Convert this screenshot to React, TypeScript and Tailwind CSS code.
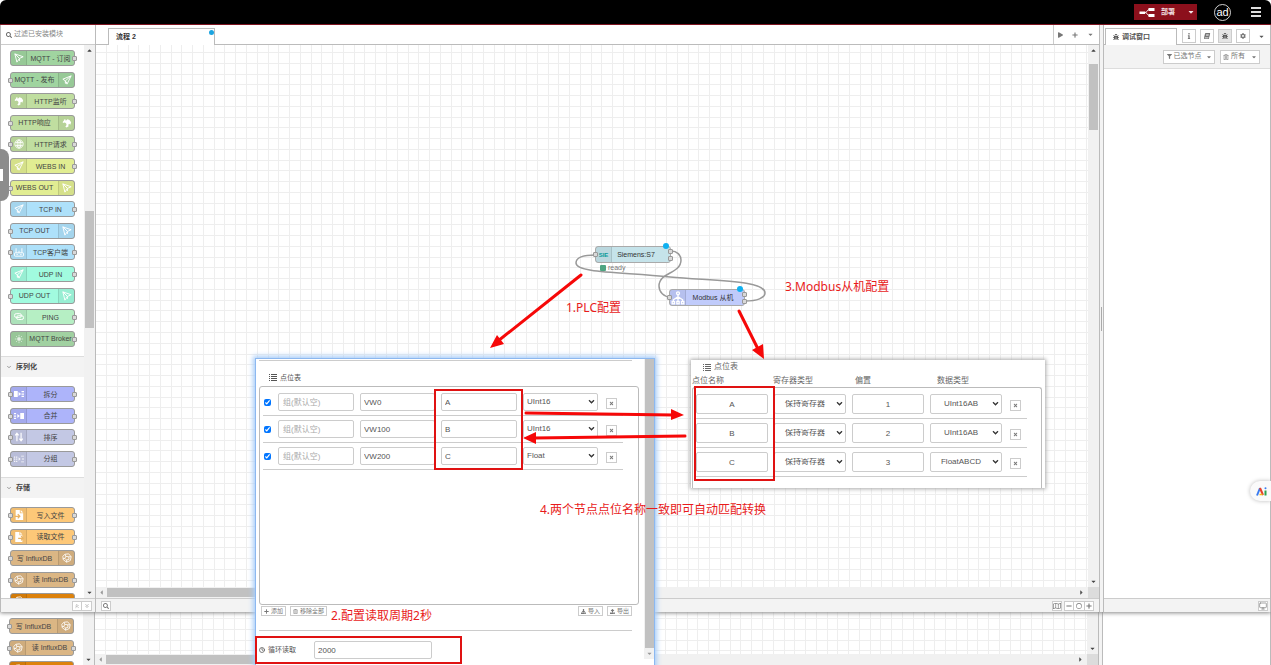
import React from "react";
import clsx from "clsx";
import {
  FaBook,
  FaBug,
  FaCaretDown,
  FaCaretLeft,
  FaCaretRight,
  FaCaretUp,
  FaCog,
  FaDownload,
  FaFilter,
  FaInfo,
  FaPlay,
  FaPlus,
  FaMinus,
  FaRegCircle,
  FaRegMap,
  FaRegTrashAlt,
  FaSearch,
  FaTimes,
  FaUpload,
} from "react-icons/fa";
import { FiChevronDown, FiChevronsDown, FiChevronsUp, FiClock, FiMonitor } from "react-icons/fi";

type IconName =
  | "send"
  | "receive"
  | "world"
  | "globe"
  | "router"
  | "link"
  | "sun"
  | "split"
  | "join"
  | "sort"
  | "batch"
  | "fileIn"
  | "fileOut"
  | "influx";

const icons: Record<IconName, React.ReactNode> = {
  send: (
    <g fill="none" stroke="#fff" strokeWidth="2.2" strokeLinejoin="round">
      <path d="M22 2 2 10l6 4 4 8Z" />
      <path d="M22 2 8 14v6l4-3" />
    </g>
  ),
  receive: (
    <g fill="none" stroke="#fff" strokeWidth="2.2" strokeLinejoin="round">
      <path d="m2 2 20 7-9 4-6 9Z" />
      <path d="m2 2 11 11v6" />
    </g>
  ),
  world: (
    <g fill="#fff">
      <path d="M2 9 6 5l4 1 3-3 5 2 4 5-2 6-3-2-2 3 1 3-5 3-3-2 3-4-1-4-3-2-5 1Z" />
      <path d="m4 5 3-2 2 1-3 3Z" />
    </g>
  ),
  globe: (
    <g fill="none" stroke="#fff" strokeWidth="2">
      <circle cx="12" cy="12" r="10" />
      <ellipse cx="12" cy="12" rx="4.500" ry="10" />
      <path d="M12 2v20M3 8.500h18M3 15.500h18" />
    </g>
  ),
  router: (
    <g fill="none" stroke="#fff" strokeWidth="2.2">
      <rect x="1" y="14" width="22" height="8" rx="2" />
      <path d="M5 14V3M19 14V3M12 14V9M6 18h3M15 18h3" />
    </g>
  ),
  link: (
    <g fill="none" stroke="#fff" strokeWidth="2.4">
      <rect x="1" y="4" width="17" height="9" rx="4.500" />
      <rect x="6" y="9" width="17" height="9" rx="4.500" />
    </g>
  ),
  sun: (
    <g fill="#fff" stroke="#fff" strokeWidth="1.8" opacity=".75">
      <circle cx="12" cy="12" r="3.500" />
      <path d="M12 2v4M12 18v4M2 12h4M18 12h4M5 5l3 3M16 16l3 3M5 19l3-3M16 8l3-3" />
    </g>
  ),
  split: (
    <g fill="#fff">
      <path d="M0 5h9v14H0zM11 7l6 5-6 5zM18 5h6v3h-6zM18 11h6v3h-6zM18 16h6v3h-6z" />
    </g>
  ),
  join: (
    <g fill="#fff">
      <path d="M15 5h9v14h-9zM8 7l6 5-6 5zM0 5h5v3H0zM0 11h5v3H0zM0 16h5v3H0z" />
    </g>
  ),
  sort: (
    <g fill="none" stroke="#fff" strokeWidth="2.8">
      <path d="M7 22V4M3 8l4-5 4 5M17 2v18M13 16l4 5 4-5" />
    </g>
  ),
  batch: (
    <g fill="#fff" opacity=".85">
      <path d="M0 6h3v3H0zM0 11h3v3H0zM0 16h3v3H0zM5 6h3v3H5zM5 11h3v3H5zM5 16h3v3H5zM11 8l5 4-5 4zM17 4h7v2h-7zM19 11h5v2h-5zM17 18h7v2h-7z" />
    </g>
  ),
  fileIn: (
    <g>
      <path fill="#fff" d="M4 0h10v8h8v16H4z" />
      <path fill="#fff" d="m16 0 6 6h-6z" />
      <path fill="none" stroke="#e9b264" strokeWidth="3" d="M2 15h10M9 10l5 5-5 5" />
    </g>
  ),
  fileOut: (
    <g>
      <path fill="#fff" d="M3 0h10v8h7v16H3z" />
      <path fill="#fff" d="m15 0 5 6h-5z" />
      <path fill="none" stroke="#e9b264" strokeWidth="3" d="M10 15h11M17 10l5 5-5 5" />
    </g>
  ),
  influx: (
    <g fill="none" stroke="#fff" strokeWidth="2">
      <path d="m7 3 9-1 6 7-2 9-9 4-8-6-1-8Z" />
      <path d="m9 8 7 1 1 6-6 2-4-4ZM9 8 7 3M16 9l6 0M11 17v5M7 13l-5 1" />
    </g>
  ),
};

type PaletteItem = {
  label: string;
  color: string;
  icon: IconName;
  side?: "left" | "right";
  ports: "in" | "out" | "both";
};

const network: PaletteItem[] = [
  { label: "MQTT - 订阅", color: "bg-[#a0d4a0]", icon: "receive", ports: "out" },
  { label: "MQTT - 发布", color: "bg-[#a0d4a0]", icon: "send", side: "right", ports: "in" },
  { label: "HTTP监听", color: "bg-[#c0dea0]", icon: "world", ports: "out" },
  { label: "HTTP响应", color: "bg-[#c0dea0]", icon: "world", side: "right", ports: "in" },
  { label: "HTTP请求", color: "bg-[#c0dea0]", icon: "globe", ports: "both" },
  { label: "WEBS IN", color: "bg-[#e1ed92]", icon: "send", ports: "out" },
  { label: "WEBS OUT", color: "bg-[#e1ed92]", icon: "receive", side: "right", ports: "in" },
  { label: "TCP IN", color: "bg-[#aee1fa]", icon: "send", ports: "out" },
  { label: "TCP OUT", color: "bg-[#aee1fa]", icon: "receive", side: "right", ports: "in" },
  { label: "TCP客户端", color: "bg-[#aee1fa]", icon: "router", ports: "both" },
  { label: "UDP IN", color: "bg-[#a1fbdf]", icon: "send", ports: "out" },
  { label: "UDP OUT", color: "bg-[#a1fbdf]", icon: "receive", side: "right", ports: "in" },
  { label: "PING", color: "bg-[#b6efc4]", icon: "link", ports: "out" },
  { label: "MQTT Broker", color: "bg-[#a1d1a1]", icon: "sun", ports: "out" },
];

const sequence: PaletteItem[] = [
  { label: "拆分", color: "bg-[#adb4fa]", icon: "split", ports: "both" },
  { label: "合并", color: "bg-[#adb4fa]", icon: "join", ports: "both" },
  { label: "排序", color: "bg-[#c3c8e4]", icon: "sort", ports: "both" },
  { label: "分组", color: "bg-[#c3c8e4]", icon: "batch", ports: "both" },
];

const influx: PaletteItem[] = [
  { label: "写 InfluxDB", color: "bg-[#dbb684]", icon: "influx", side: "right", ports: "in" },
  { label: "读 InfluxDB", color: "bg-[#dbb684]", icon: "influx", ports: "both" },
  { label: "", color: "bg-[#dd820c]", icon: "influx", ports: "in" },
];

const storage: PaletteItem[] = [
  { label: "写入文件", color: "bg-[#fdc878]", icon: "fileIn", ports: "both" },
  { label: "读取文件", color: "bg-[#fdc878]", icon: "fileOut", ports: "both" },
  ...influx,
];

const Port = ({ className }: { className: string }) => (
  <span className={clsx("absolute size-[5px] rounded-[1px] border border-[#999] bg-[#d9d9d9]", className)} />
);

const ListIcon = ({ className }: { className: string }) => (
  <svg viewBox="0 0 8 7" className={className} stroke="currentColor" shapeRendering="crispEdges">
    <path d="M0 .5h1M2 .5h6M0 2.500h1M2 2.500h6M0 4.500h1M2 4.500h6M0 6.500h1M2 6.500h6" />
  </svg>
);

const PaletteNode = ({ label, color, icon, side = "left", ports }: PaletteItem) => (
  <div
    className={clsx(
      "relative flex h-4 w-full shrink-0 rounded-[3px] border border-[#9a9a9a]",
      side === "right" && "flex-row-reverse",
      color,
    )}
  >
    <span
      className={clsx(
        "flex w-4 shrink-0 items-center justify-center border-black/10 bg-black/5",
        side === "right" ? "border-l" : "border-r",
      )}
    >
      <svg viewBox="0 0 24 24" className="size-[10px]">{icons[icon]}</svg>
    </span>
    <span className="flex min-w-0 flex-1 items-center justify-center whitespace-nowrap text-[7px] leading-none text-[#444]">
      {label}
    </span>
    {ports !== "out" && <Port className="-left-[3px] top-[5px]" />}
    {ports !== "in" && <Port className="-right-[3px] top-[5px]" />}
  </div>
);

const NodeList = ({ items, className }: { items: PaletteItem[]; className: string }) => (
  <div className={clsx("ml-[9px] flex w-[65px] flex-col justify-between", className)}>
    {items.map((item, i) => (
      <PaletteNode key={i} {...item} />
    ))}
  </div>
);

const CategoryTitle = ({ children }: { children: React.ReactNode }) => (
  <h3 className="flex h-[21px] items-center gap-1 border-t border-[#ddd] bg-[#f3f3f3] pl-[5px] text-[7px] font-bold text-[#444]">
    <FiChevronDown className="size-[6px]" />
    {children}
  </h3>
);

const Grid = ({ x, y }: { x: number; y: number }) => (
  <svg className="h-full w-full" stroke="#eeeeee" strokeWidth="1" shapeRendering="crispEdges">
    {Array.from({ length: 180 }, (_, i) => {
      const step = i * 10.77;
      return (
        <React.Fragment key={i}>
          <line x1={Math.round(x + step)} x2={Math.round(x + step)} y1="0" y2="100%" />
          <line y1={Math.round(y + step)} y2={Math.round(y + step)} x1="0" x2="100%" />
        </React.Fragment>
      );
    })}
  </svg>
);

const HScroll = () => (
  <div className="flex h-[11px] shrink-0 items-center bg-[#f1f1f1] text-[#555]">
    <div className="flex flex-1 items-center">
      <FaCaretLeft className="mx-[2px] size-[7px] text-[#999]" />
      <div className="h-[9px] w-2/5 bg-[#c1c1c1]" />
    </div>
    <FaCaretRight className="mr-[3px] size-[7px]" />
    <div className="h-full w-[11px] bg-[#dcdcdc]" />
  </div>
);

const iconButton = "flex items-center justify-center border border-[#ccc] bg-white text-[#777]";

const Header = () => (
  <header className="flex h-[25px] shrink-0 items-center justify-end rounded-t-[6px] border-b border-[#7c1420] bg-black pr-[10px]">
    <div className="mr-[17px] flex h-4 items-center bg-[#8c101c] text-[#f3e4e6]">
      <button className="flex h-full items-center gap-[6px] pl-[5px] pr-[9px] text-[7px] font-bold">
        <svg viewBox="0 0 32 22" className="h-[11px] w-4">
          <path d="M10 11C19 11 14 5 22 5M10 11c9 0 4 6 12 6" fill="none" stroke="#fff" strokeWidth="2" />
          <path d="M1 9h11v5H1zM19 2h12v6H19zM19 14h12v6H19z" fill="#fff" />
        </svg>
        部署
      </button>
      <button aria-label="部署选项" className="flex h-full w-[13px] items-center justify-center">
        <FaCaretDown className="size-2" />
      </button>
    </div>
    <button className="mr-5 flex size-[17px] items-center justify-center rounded-full border border-white/80 text-[11px] leading-none text-white">
      ad
    </button>
    <button aria-label="菜单" className="flex w-[10px] flex-col gap-[2px]">
      <span className="h-[2px] bg-[#ddd]" />
      <span className="h-[2px] bg-[#ddd]" />
      <span className="h-[2px] bg-[#ddd]" />
    </button>
  </header>
);

const Palette = () => (
  <aside className="flex w-24 shrink-0 flex-col border-x border-[#bbb] bg-white">
    <label className="flex h-5 shrink-0 items-center gap-[2px] border-b border-[#ccc] pl-[5px] text-[#666]">
      <FaSearch className="size-[6px]" />
      <input
        aria-label="过滤已安装模块"
        placeholder="过滤已安装模块"
        className="w-20 text-[7px] outline-none placeholder:text-[#888]"
      />
    </label>
    <div className="flex min-h-0 flex-1">
      <div className="w-[83px] overflow-hidden pt-[5px]">
        <NodeList items={network} className="mb-[9px] h-[297px]" />
        <CategoryTitle>序列化</CategoryTitle>
        <NodeList items={sequence} className="mb-[10px] mt-[9px] h-[81px]" />
        <CategoryTitle>存储</CategoryTitle>
        <NodeList items={storage} className="mt-[9px] h-[102px]" />
      </div>
      <div className="flex w-[11px] flex-col items-center bg-[#f1f1f1] pb-[2px] pt-[2px] text-[#444]">
        <FaCaretUp className="size-[7px]" />
        <div className="mt-[157px] h-[117px] w-[9px] bg-[#c1c1c1]" />
        <FaCaretDown className="mt-auto size-[7px]" />
      </div>
    </div>
    <div className="flex h-[14px] shrink-0 items-center justify-end border-t border-[#ccc] bg-[#f3f3f3] pr-[3px]">
      <button aria-label="全部折叠" className={clsx(iconButton, "size-[10px]")}>
        <FiChevronsUp className="size-[6px]" />
      </button>
      <button aria-label="全部展开" className={clsx(iconButton, "size-[10px] border-l-0")}>
        <FiChevronsDown className="size-[6px]" />
      </button>
    </div>
  </aside>
);

const Workspace = () => (
  <main className="flex min-w-0 flex-1 flex-col border-r border-[#bbb]">
    <div className="flex h-5 shrink-0 items-end border-b border-[#bbb] bg-white pl-3">
      <button className="relative -mb-px flex h-[17px] w-[107px] items-center border border-b-0 border-[#bbb] bg-white pl-[7px] text-[7px] font-bold text-[#333]">
        流程 2
        <span className="absolute right-0 top-[1px] size-[5px] rounded-full bg-[#1ba4e0]" />
      </button>
      <div className="ml-auto flex h-full w-[46px] items-center justify-between border-l border-[#ccc] pl-1 pr-[5px] text-[#777]">
        <button aria-label="下一个流程"><FaPlay className="h-[8px] w-[5px]" /></button>
        <button aria-label="添加流程"><FaPlus className="size-[6px]" /></button>
        <button aria-label="流程列表"><FaCaretDown className="size-[7px]" /></button>
      </div>
    </div>
    <div className="flex min-h-0 flex-1">
      <div className="min-w-0 flex-1 overflow-hidden">
        <Grid x={10} y={7} />
      </div>
      <div className="flex w-[11px] flex-col items-center bg-[#f1f1f1] py-[2px] text-[#444]">
        <FaCaretUp className="size-[7px]" />
        <div className="mt-[10px] h-[66px] w-[9px] bg-[#c1c1c1]" />
        <FaCaretDown className="mt-auto size-[7px]" />
      </div>
    </div>
    <HScroll />
    <div className="flex h-[14px] shrink-0 items-center border-t border-[#ccc] bg-[#f3f3f3] pl-[5px] pr-[5px]">
      <button aria-label="搜索" className={clsx(iconButton, "size-[10px]")}>
        <FaSearch className="size-[6px]" />
      </button>
      <button aria-label="地图" className={clsx(iconButton, "ml-auto mr-[2px] size-[10px]")}>
        <FaRegMap className="size-2" />
      </button>
      <button aria-label="缩小" className={clsx(iconButton, "size-[10px]")}>
        <FaMinus className="size-[6px]" />
      </button>
      <button aria-label="重置缩放" className={clsx(iconButton, "size-[10px] border-x-0")}>
        <FaRegCircle className="size-[6px]" />
      </button>
      <button aria-label="放大" className={clsx(iconButton, "size-[10px]")}>
        <FaPlus className="size-[6px]" />
      </button>
    </div>
  </main>
);

const Sidebar = () => (
  <aside className="flex w-[168px] shrink-0 flex-col border-x border-[#bbb] bg-white text-[7px] text-[#555]">
    <div className="flex h-5 shrink-0 items-end border-b border-[#bbb] pl-px">
      <button className="-mb-px flex h-[17px] w-[72px] items-center gap-[3px] border border-b-0 border-[#bbb] bg-white pl-[7px] font-bold">
        <FaBug className="size-[6px]" />
        调试窗口
      </button>
      <div className="ml-[5px] flex flex-1 items-center gap-1 pb-px">
        <button aria-label="信息" className={clsx(iconButton, "size-[14px]")}><FaInfo className="size-[6px]" /></button>
        <button aria-label="帮助" className={clsx(iconButton, "size-[14px]")}><FaBook className="size-[6px] -skew-x-12" /></button>
        <button aria-label="调试" className="flex size-[14px] items-center justify-center border border-[#ccc] bg-[#e5e5e5]">
          <FaBug className="size-[6px]" />
        </button>
        <button aria-label="配置" className={clsx(iconButton, "size-[14px]")}><FaCog className="size-[6px]" /></button>
        <button aria-label="更多" className="ml-1"><FaCaretDown className="size-[7px]" /></button>
      </div>
    </div>
    <div className="flex h-6 shrink-0 items-center justify-end gap-[5px] border-b border-[#ddd] bg-[#f3f3f3] pr-[10px]">
      <button className={clsx(iconButton, "h-[14px] w-[52px] gap-[2px]")}>
        <FaFilter className="size-[5px]" />
        已选节点
        <FaCaretDown className="ml-[2px] size-[6px]" />
      </button>
      <button className={clsx(iconButton, "h-[14px] w-10 gap-[2px]")}>
        <FaRegTrashAlt className="size-[6px]" />
        所有
        <FaCaretDown className="ml-1 size-[6px]" />
      </button>
    </div>
    <div className="flex-1" />
    <div className="flex h-[14px] shrink-0 items-center justify-end border-t border-[#ccc] bg-[#f3f3f3] pr-[2px]">
      <button aria-label="打开窗口" className={clsx(iconButton, "size-[10px]")}>
        <FiMonitor className="size-2" />
      </button>
    </div>
  </aside>
);

// bottom edge of the second editor that sits behind the first one
const BackEditor = () => (
  <div className="flex h-[53px] shrink-0 bg-white">
    <div className="flex w-[95px] shrink-0 border-r border-[#bbb]">
      <div className="w-[83px] overflow-hidden pt-[6px]">
        <NodeList items={influx} className="h-[59px]" />
      </div>
      <div className="flex flex-1 items-end justify-center bg-[#f1f1f1] pb-[2px] text-[#444]">
        <FaCaretDown className="size-[7px]" />
      </div>
    </div>
    <div className="flex min-w-0 flex-1 flex-col">
      <div className="flex min-h-0 flex-1">
        <div className="min-w-0 flex-1 overflow-hidden">
          <Grid x={10} y={6} />
        </div>
        <div className="flex w-[11px] items-end justify-center bg-[#f1f1f1] pb-[2px] text-[#444]">
          <FaCaretDown className="size-[7px]" />
        </div>
      </div>
      <HScroll />
    </div>
    <div className="w-[5px] border-x border-[#bbb] bg-[#f3f3f3]" />
    <div className="w-[168px] border-r border-[#bbb]" />
  </div>
);

const FlowNode = ({ className, children }: { className: string; children: React.ReactNode }) => (
  <div
    className={clsx(
      "absolute flex h-[17px] w-[76px] items-center rounded-[3px] border border-[#aaa] text-[7px] leading-none text-[#333]",
      className,
    )}
  >
    {children}
    <Port className="-left-[3px] top-[5px]" />
    <Port className="-right-[3px] top-[2px]" />
    <Port className="-right-[3px] top-[9px]" />
    <span className="absolute -top-1 right-[1px] size-[6px] rounded-full bg-[#0fb0f0]" />
  </div>
);

const Flow = () => (
  <>
    <svg className="pointer-events-none absolute left-0 top-0 h-full w-full" fill="none" stroke="#999" strokeWidth="1.500">
      <path d="M671 251C677 251 681 255 681 260C681 274 659 272 659 286C659 292 664 297 670 297" />
      <path d="M745 301C757 301 765 298 765 293C765 280 715 281 670 277C620 272 576 273 576 263C576 257 584 255 595 255" />
    </svg>
    <FlowNode className="left-[595px] top-[246px] bg-[#c5e3ea]">
      <span className="flex h-full w-4 items-center justify-center border-r border-black/10 bg-black/5 text-[6px] font-bold text-[#0a9a9a]">
        SIE
      </span>
      <span className="flex-1 pr-[10px] text-center">Siemens:S7</span>
    </FlowNode>
    <div className="absolute left-[600px] top-[264px] flex items-center gap-[2px] text-[7px] leading-none text-[#777]">
      <span className="size-[6px] rounded-[1px] bg-[#4fa583]" />
      ready
    </div>
    <FlowNode className="left-[669px] top-[289px] bg-[#c0cbfb]">
      <span className="flex h-full w-4 items-center justify-center border-r border-black/10 bg-black/5">
        <svg viewBox="0 0 24 24" className="size-[14px]" fill="none" stroke="#fff" strokeWidth="2.2">
          <circle cx="12" cy="4" r="2.500" />
          <path d="M12 7v11M4 18v-3l8-5 8 5v3" />
          <rect x="2" y="18" width="4" height="4" />
          <rect x="10" y="18" width="4" height="4" />
          <rect x="18" y="18" width="4" height="4" />
        </svg>
      </span>
      <span className="flex-1 pr-[4px] text-center">Modbus 从机</span>
    </FlowNode>
  </>
);

const field = "rounded-[2px] border border-[#ccc] bg-white text-[8px] text-[#555] outline-none";

type SelectProps = { label: string; value: string; options: string[]; className?: string };

const Select = ({ label, value, options, className }: SelectProps) => (
  <div className="relative">
    <select
      aria-label={label}
      defaultValue={value}
      className={clsx(field, "block w-full appearance-none", className)}
    >
      {options.map((o) => (
        <option key={o}>{o}</option>
      ))}
    </select>
    <svg viewBox="0 0 8 6" className="pointer-events-none absolute right-[3px] top-1/2 h-[5px] w-[7px] -translate-y-1/2">
      <path d="m1 1 3 3 3-3" fill="none" stroke="#333" strokeWidth="1.600" />
    </svg>
  </div>
);

const RemoveButton = () => (
  <button aria-label="删除" className={clsx(iconButton, "mt-[3px] size-[11px]")}>
    <FaTimes className="size-[5px]" />
  </button>
);

const plcRows = [
  { address: "VW0", name: "A", type: "UInt16" },
  { address: "VW100", name: "B", type: "UInt16" },
  { address: "VW200", name: "C", type: "Float" },
];

const smallButton = "flex h-[10px] items-center gap-[2px] border border-[#ccc] bg-white px-[2px] text-[6px] leading-none text-[#777]";

const PlcDialog = () => (
  <section className="absolute left-[255px] top-[358px] flex h-[320px] w-[400px] border border-[#8cb8f0] bg-white shadow-[0_0_5px_2px_#a8cdf8]">
    <div className="w-[388px] shrink-0 pl-[3px] pt-[1px] text-[#555]">
      <div className="mr-3 border-t border-[#ccc]" />
      <h2 className="flex h-[25px] items-end gap-[3px] pb-[5px] pl-[10px] text-[7px] leading-none">
        <ListIcon className="h-[7px] w-2" />
        点位表
      </h2>
      <div className="mr-[5px] h-[219px] rounded-[3px] border border-[#bbb] px-[3px] pt-[2px]">
        {plcRows.map((row) => (
          <div
            key={row.address}
            className="mr-3 grid h-[27px] grid-cols-[9px_76px_75px_76px_75px_11px] items-center gap-x-[6px] border-b border-[#ccc]"
          >
            <input type="checkbox" defaultChecked aria-label={row.name} className="ml-[1px] size-[7px] accent-[#0075ff]" />
            <input aria-label="组" placeholder="组(默认空)" className={clsx(field, "h-[18px] px-1 placeholder:text-[#aaa]")} />
            <input aria-label="地址" defaultValue={row.address} className={clsx(field, "h-[18px] px-[3px]")} />
            <input aria-label="点位名称" defaultValue={row.name} className={clsx(field, "h-[18px] px-[3px]")} />
            <Select label="数据类型" value={row.type} options={["UInt16", "Float"]} className="h-[18px] px-[3px]" />
            <div className="pl-[2px]"><RemoveButton /></div>
          </div>
        ))}
      </div>
      <div className="mr-3 flex items-center gap-1 pl-[2px] pt-[1px]">
        <button className={smallButton}><FaPlus className="size-[5px]" />添加</button>
        <button className={smallButton}><FaRegTrashAlt className="size-[5px]" />移除全部</button>
        <button className={clsx(smallButton, "ml-auto")}><FaDownload className="size-[5px]" />导入</button>
        <button className={smallButton}><FaUpload className="size-[5px]" />导出</button>
      </div>
      <div className="mr-3 mt-[14px] border-t border-[#ccc]" />
      <label className="mt-[10px] flex items-center text-[7px]">
        <FiClock className="mr-[3px] size-[6px]" strokeWidth={3} />
        <span className="w-[46px]">循环读取</span>
        <input defaultValue="2000" className={clsx(field, "h-[18px] w-[118px] px-[3px]")} />
      </label>
    </div>
    <div className="flex h-[300px] w-[10px] flex-col items-center bg-[#f1f1f1]">
      <div className="h-[289px] w-[9px] bg-[#c1c1c1]" />
      <FaCaretDown className="mt-[2px] size-[7px] text-[#999]" />
    </div>
  </section>
);

const modbusRows = [
  { name: "A", offset: "1", type: "UInt16AB" },
  { name: "B", offset: "2", type: "UInt16AB" },
  { name: "C", offset: "3", type: "FloatABCD" },
];

const ModbusDialog = () => (
  <section className="absolute left-[691px] top-[360px] w-[354px] overflow-hidden bg-white px-[1px] text-[8px] leading-none text-[#666] shadow-[0_0_4px_1px_#aaa]">
    <h2 className="flex h-[14px] items-center gap-[3px] pl-[11px]">
      <ListIcon className="h-[7px] w-2" />
      点位表
    </h2>
    <div className="grid h-[13px] grid-cols-[81px_82px_82px_1fr] items-center">
      <span>点位名称</span>
      <span>寄存器类型</span>
      <span>偏置</span>
      <span>数据类型</span>
    </div>
    <div className="mr-[2px] h-[101px] rounded-t-[3px] border border-b-0 border-[#bbb] pl-[3px] pr-[14px] pt-[2px]">
      {modbusRows.map((row) => (
        <div
          key={row.name}
          className="grid h-[29px] grid-cols-[72px_72px_72px_72px_11px] items-center gap-x-[6px] border-b border-[#ccc]"
        >
          <input aria-label="点位名称" defaultValue={row.name} className={clsx(field, "h-5 text-center")} />
          <Select label="寄存器类型" value="保持寄存器" options={["保持寄存器"]} className="h-5 pr-[10px] [text-align-last:center]" />
          <input aria-label="偏置" defaultValue={row.offset} className={clsx(field, "h-5 text-center")} />
          <Select label="数据类型" value={row.type} options={["UInt16AB", "FloatABCD"]} className="h-5 pr-[10px] [text-align-last:center]" />
          <div className="pl-[2px]"><RemoveButton /></div>
        </div>
      ))}
    </div>
  </section>
);

const Note = ({ className, children }: { className: string; children: React.ReactNode }) => (
  <p
    className={clsx(
      "absolute whitespace-nowrap font-['Noto_Sans','Noto_Sans_CJK_SC',sans-serif] text-[12px] leading-4 text-[#e81b1b]",
      className,
    )}
  >
    {children}
  </p>
);

const Annotations = () => (
  <>
    <svg className="pointer-events-none absolute left-0 top-0 h-full w-full" stroke="#f60808" strokeWidth="3" fill="none">
      <g strokeLinecap="round">
        <path d="M581 275 498 341" />
        <path d="M739 311 758 349" />
        <path d="M526 413 674 415" />
        <path d="M685 436 534 438" />
      </g>
      <g stroke="none" fill="#f60808">
        <path d="m490 348 7-13 7 9ZM764 359l-12-9 11-6ZM684 415l-13-6v11ZM523 438l13-6v12Z" />
      </g>
      <g stroke="#e01212" strokeWidth="2">
        <rect x="435" y="390" width="87" height="79" />
        <rect x="695" y="387" width="79" height="93" />
        <rect x="256" y="637" width="205" height="26" />
      </g>
    </svg>
    <Note className="left-[566px] top-[300px]">1.PLC配置</Note>
    <Note className="left-[331px] top-[608px]">2.配置读取周期2秒</Note>
    <Note className="left-[785px] top-[279px]">3.Modbus从机配置</Note>
    <Note className="left-[540px] top-[502px]">4.两个节点点位名称一致即可自动匹配转换</Note>
  </>
);

const App = () => (
  <div className="relative flex h-screen flex-col overflow-hidden bg-white font-['Liberation_Sans','Noto_Sans_CJK_SC',sans-serif]">
    <div className="relative z-10 flex min-h-0 flex-1 flex-col shadow-[0_1px_4px_#888]">
      <Header />
      <div className="flex min-h-0 flex-1">
        <Palette />
        <Workspace />
        <div className="flex w-[3px] shrink-0 items-center bg-[#f3f3f3]">
          <span className="mx-auto h-6 w-px bg-[#aaa]" />
        </div>
        <Sidebar />
      </div>
    </div>
    <BackEditor />
    <div className="absolute inset-0 z-20">
      <Flow />
      <PlcDialog />
      <ModbusDialog />
      <Annotations />
      <button aria-label="展开面板" className="absolute left-0 top-[149px] flex h-[52px] w-[9px] items-center rounded-r-[8px] bg-[#8c8c8c]">
        <span className="h-3 w-[3px] bg-white" />
      </button>
      <button aria-label="AI" className="absolute right-0 top-[481px] flex h-5 w-[21px] items-center justify-end rounded-l-full bg-[#fafafa] pr-1 shadow-[0_0_4px_#bbb]">
        <svg viewBox="0 0 22 18" className="h-[9px] w-[11px]" fill="none" strokeWidth="4">
          <path d="M2 17 8 2" stroke="#3b7cf0" />
          <path d="m8 2 6 14" stroke="#e5402c" />
          <path d="M7 15h6" stroke="#f5b81c" strokeWidth="3" />
          <path d="M19 7v10" stroke="#2ca14c" />
          <circle cx="19" cy="2.500" r="2" fill="#3b7cf0" stroke="none" />
        </svg>
      </button>
    </div>
  </div>
);

export default App;
